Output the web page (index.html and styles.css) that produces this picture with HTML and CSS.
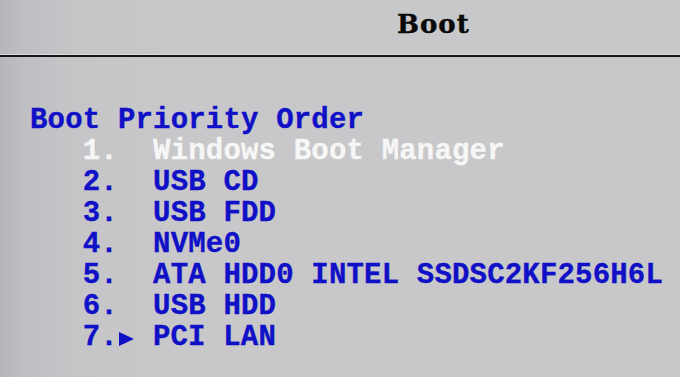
FILE: index.html
```html
<!DOCTYPE html>
<html>
<head>
<meta charset="utf-8">
<link rel="stylesheet" href="styles.css">
</head>
<body>
<div class="screen">
  <header class="tabbar">
    <div class="title">Boot</div>
  </header>
  <main class="content">
    <div class="line heading">Boot Priority Order</div>
    <div class="line item selected">   1.  Windows Boot Manager</div>
    <div class="line item">   2.  USB CD</div>
    <div class="line item">   3.  USB FDD</div>
    <div class="line item">   4.  NVMe0</div>
    <div class="line item">   5.  ATA HDD0 INTEL SSDSC2KF256H6L</div>
    <div class="line item">   6.  USB HDD</div>
    <div class="line item">   7.<span class="arrow"><span class="tri"></span></span> PCI LAN</div>
  </main>
</div>
</body>
</html>
```

FILE: styles.css
```css
html, body {
  margin: 0;
  padding: 0;
  width: 680px;
  height: 377px;
  overflow: hidden;
}
.screen {
  width: 680px;
  height: 377px;
  background:
    linear-gradient(90deg, #b6b5ba 0px, #bfbec2 25px, #c5c4c7 70px, rgba(200,199,202,0) 160px),
    #c8c7c9;
}
.tabbar {
  height: 46px;
  padding-top: 9px;
  box-sizing: content-box;
  box-shadow: inset 0 -1px 0 #dcdbdd;
  border-bottom: 2px solid #151515;
  padding-left: 397px;
}
.title {
  font-family: "DejaVu Serif", serif;
  font-weight: bold;
  font-size: 26px;
  line-height: 31px;
  letter-spacing: 1px;
  color: #0a0a0a;
  -webkit-text-stroke: 0.4px #0a0a0a;
}
.content {
  padding-top: 48px;
  padding-left: 30px;
}
.line {
  font-family: "Liberation Mono", monospace;
  font-weight: bold;
  font-size: 29px;
  line-height: 31px;
  letter-spacing: 0.18px;
  white-space: pre;
  color: #1010c6;
  -webkit-text-stroke: 0.35px #1010c6;
}
.selected {
  color: #f6f6f6;
  -webkit-text-stroke: 0.35px #f6f6f6;
}
.arrow {
  display: inline-block;
  width: 1ch;
  height: 31px;
  vertical-align: top;
  position: relative;
}
.tri {
  position: absolute;
  left: 1px;
  top: 10px;
  width: 0;
  height: 0;
  border-top: 7px solid transparent;
  border-bottom: 7px solid transparent;
  border-left: 15px solid #1010c6;
}
```
